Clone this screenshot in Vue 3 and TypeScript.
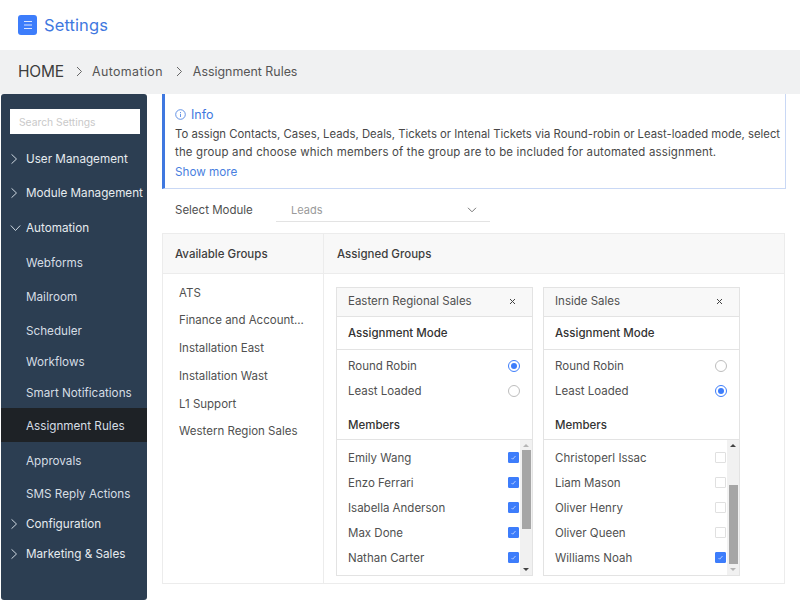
<script setup lang="ts">
interface NavItem { label: string; height: number; icon?: 'right' | 'down'; active?: boolean; nudge?: number }
interface Member { name: string; checked: boolean }
interface GroupCard { title: string; mode: 'round' | 'least'; members: Member[]; thumbOffset: number; topDim: boolean }

const nav: NavItem[] = [
  { label: 'User Management', height: 34, icon: 'right' },
  { label: 'Module Management', height: 34, icon: 'right' },
  { label: 'Automation', height: 36, icon: 'down' },
  { label: 'Webforms', height: 34 },
  { label: 'Mailroom', height: 34 },
  { label: 'Scheduler', height: 34 },
  { label: 'Workflows', height: 28 },
  { label: 'Smart Notifications', height: 32, nudge: 2 },
  { label: 'Assignment Rules', height: 34, active: true, nudge: 2 },
  { label: 'Approvals', height: 37 },
  { label: 'SMS Reply Actions', height: 30 },
  { label: 'Configuration', height: 30, icon: 'right' },
  { label: 'Marketing & Sales', height: 30, icon: 'right' },
]

const groups: string[] = [
  'ATS',
  'Finance and Account...',
  'Installation East',
  'Installation Wast',
  'L1 Support',
  'Western Region Sales',
]

const cards: GroupCard[] = [
  {
    title: 'Eastern Regional Sales',
    mode: 'round',
    thumbOffset: 10,
    topDim: true,
    members: [
      { name: 'Emily Wang', checked: true },
      { name: 'Enzo Ferrari', checked: true },
      { name: 'Isabella Anderson', checked: true },
      { name: 'Max Done', checked: true },
      { name: 'Nathan Carter', checked: true },
    ],
  },
  {
    title: 'Inside Sales',
    mode: 'least',
    thumbOffset: 45,
    topDim: false,
    members: [
      { name: 'Christoperl Issac', checked: false },
      { name: 'Liam Mason', checked: false },
      { name: 'Oliver Henry', checked: false },
      { name: 'Oliver Queen', checked: false },
      { name: 'Williams Noah', checked: true },
    ],
  },
]
</script>

<template>
  <div class="page">
    <header class="top">
      <span class="logo">
        <svg width="10" height="10" viewBox="0 0 10 10" fill="none" stroke="#dbe6ff" stroke-width="1">
          <path d="M1 1.5h8M1 5h8M1 8.5h8" />
        </svg>
      </span>
      <span class="title">Settings</span>
    </header>

    <nav class="crumbs">
      <span class="home">HOME</span>
      <svg class="crumb-sep" width="7" height="11" viewBox="0 0 7 11" fill="none" stroke="#666" stroke-width="1">
        <path d="M1 1l4.5 4.5L1 10" />
      </svg>
      <span class="crumb crumb-wide">Automation</span>
      <svg class="crumb-sep second" width="7" height="11" viewBox="0 0 7 11" fill="none" stroke="#666" stroke-width="1">
        <path d="M1 1l4.5 4.5L1 10" />
      </svg>
      <span class="crumb">Assignment Rules</span>
    </nav>

    <div class="body">
      <aside class="side">
        <div class="search">Search Settings</div>
        <ul class="nav">
          <li
            v-for="item in nav"
            :key="item.label"
            class="nav-row"
            :class="{ active: item.active, parent: item.icon }"
            :style="{ height: item.height + 'px', paddingTop: (item.nudge ?? 0) + 'px' }"
          >
            <svg v-if="item.icon === 'right'" class="nav-ico" width="8" height="11" viewBox="0 0 8 11" fill="none" stroke="#cfd8e0" stroke-width="1">
              <path d="M1.5 .8l5 4.7-5 4.7" />
            </svg>
            <svg v-if="item.icon === 'down'" class="nav-ico" width="11" height="8" viewBox="0 0 11 8" fill="none" stroke="#cfd8e0" stroke-width="1">
              <path d="M.8 1.5l4.7 5 4.7-5" />
            </svg>
            <span class="nav-label">{{ item.label }}</span>
          </li>
        </ul>
      </aside>

      <main class="main">
        <section class="info">
          <div class="info-head">
            <svg width="11" height="11" viewBox="0 0 11 11" fill="none" stroke="#3f78e0" stroke-width=".8">
              <circle cx="5.5" cy="5.5" r="4.8" />
              <path d="M5.5 4.8v3.2M5.5 3v1" />
            </svg>
            <span>Info</span>
          </div>
          <p class="info-text"><span class="line-a">To assign Contacts, Cases, Leads, Deals, Tickets or Intenal Tickets via Round-robin or Least-loaded mode, select</span><br /><span class="line-b">the group and choose which members of the group are to be included for automated assignment.</span></p>
          <a class="more">Show more</a>
        </section>

        <div class="module">
          <span class="module-label">Select Module</span>
          <div class="module-select">
            <span>Leads</span>
            <svg width="10" height="6" viewBox="0 0 10 6" fill="none" stroke="#777" stroke-width="1">
              <path d="M1 .8l4 4 4-4" />
            </svg>
          </div>
        </div>

        <section class="table">
          <div class="col-left">
            <div class="th">Available Groups</div>
            <ul class="groups">
              <li v-for="g in groups" :key="g" class="group">{{ g }}</li>
            </ul>
          </div>
          <div class="col-right">
            <div class="th th-right">Assigned Groups</div>
            <div class="cards">
              <article v-for="card in cards" :key="card.title" class="card">
                <div class="card-head">
                  <span>{{ card.title }}</span>
                  <svg width="7" height="7" viewBox="0 0 7 7" fill="none" stroke="#444" stroke-width="1">
                    <path d="M1 1l5 5M6 1L1 6" />
                  </svg>
                </div>
                <div class="card-h mode-h">Assignment Mode</div>
                <div class="modes">
                  <div class="mode">
                    <span>Round Robin</span>
                    <span class="radio" :class="{ on: card.mode === 'round' }"></span>
                  </div>
                  <div class="mode">
                    <span>Least Loaded</span>
                    <span class="radio" :class="{ on: card.mode === 'least' }"></span>
                  </div>
                </div>
                <div class="card-h members-h">Members</div>
                <div class="members">
                  <ul class="member-list">
                    <li v-for="m in card.members" :key="m.name" class="member">
                      <span>{{ m.name }}</span>
                      <span class="check" :class="{ on: m.checked }">
                        <svg v-if="m.checked" width="7" height="7" viewBox="0 0 7 7" fill="none" stroke="#cfe0ff" stroke-width=".8">
                          <path d="M1.5 4l1.2 1.2L5.5 2" />
                        </svg>
                      </span>
                    </li>
                  </ul>
                  <div class="scroll">
                    <span class="arrow up" :class="{ dim: card.topDim }"></span>
                    <span class="thumb" :style="{ marginTop: card.thumbOffset + 'px' }"></span>
                    <span class="arrow down" :class="{ dim: !card.topDim }"></span>
                  </div>
                </div>
              </article>
            </div>
          </div>
        </section>
      </main>
    </div>
  </div>
</template>

<style>
html, body { margin: 0; background: #fff; }
</style>

<style scoped>
* { box-sizing: border-box; }
ul { list-style: none; margin: 0; padding: 0; }
p { margin: 0; }
.page {
  width: 800px;
  height: 600px;
  overflow: hidden;
  display: flex;
  flex-direction: column;
  font-family: Inter, "Open Sans", sans-serif;
  font-size: 11.5px;
  color: #505050;
  background: #fff;
}
.top {
  height: 50px;
  flex: none;
  display: flex;
  align-items: center;
  padding-left: 18px;
  gap: 7px;
}
.logo {
  width: 19px;
  height: 20px;
  margin-top: -1px;
  border-radius: 3px;
  background: #3d7dfb;
  display: flex;
  align-items: center;
  justify-content: center;
}
.title { font-size: 16.5px; color: #3f78e0; letter-spacing: .1px; }
.crumbs {
  height: 44px;
  flex: none;
  background: #f0f1f2;
  display: flex;
  align-items: center;
  padding: 0 0 2px 18px;
  color: #555;
}
.home { font-size: 15.5px; color: #3d3d3d; width: 58px; letter-spacing: -.2px; }
.crumb { font-size: 12.4px; }
.crumb-wide { letter-spacing: .4px; }
.crumb-sep { margin: 0 9px 0 0; }
.crumb-sep.second { margin: 0 10px 0 13px; }
.body { flex: 1; display: flex; min-height: 0; }
.side {
  width: 146px;
  margin-left: 1px;
  flex: none;
  background: #2c3e52;
  border-radius: 3px;
  padding-top: 15px;
}
.search {
  width: 130px;
  height: 25px;
  margin-left: 9px;
  background: #fff;
  color: #c9c9c9;
  font-size: 10.3px;
  line-height: 26px;
  padding-left: 9px;
}
.nav { margin-top: 8px; }
.nav-row {
  position: relative;
  display: flex;
  align-items: center;
  padding-left: 25px;
  color: #d5dde4;
  font-size: 11.7px;
  white-space: nowrap;
}
.nav-row.parent { color: #e6ebef; }
.nav-row.active { background: #1e2226; }
.nav-ico { position: absolute; left: 9px; top: 50%; transform: translateY(-50%); }
.main { flex: 1; min-width: 0; padding-left: 15px; }
.info {
  width: 624px;
  height: 95px;
  border: 1px solid #c9d8f5;
  border-top: none;
  border-left: 3px solid #3f78e0;
  padding: 13px 0 0 10px;
  color: #484848;
}
.info-head {
  display: flex;
  align-items: center;
  gap: 5px;
  color: #3f78e0;
  font-size: 12.5px;
  height: 14px;
}
.info-text { margin-top: 4px; line-height: 18px; white-space: nowrap; }
.line-a { font-size: 11.32px; }
.line-b { font-size: 11.45px; letter-spacing: .17px; }
.more { display: block; margin-top: 3px; color: #4a7fe0; font-size: 11.7px; line-height: 16px; }
.module {
  height: 44px;
  display: flex;
  align-items: center;
  padding: 0 0 2px 13px;
}
.module-label { width: 101px; }
.module-select {
  width: 214px;
  height: 24px;
  border-bottom: 1px solid #e3e3e3;
  display: flex;
  align-items: center;
  justify-content: space-between;
  padding: 0 13px 0 15px;
  color: #9a9a9a;
  font-size: 11px;
}
.table {
  width: 623px;
  height: 351px;
  border: 1px solid #ececec;
  display: flex;
}
.col-left { width: 161px; flex: none; border-right: 1px solid #ececec; }
.col-right { flex: 1; min-width: 0; }
.th {
  height: 40px;
  background: #f8f8f8;
  border-bottom: 1px solid #ececec;
  display: flex;
  align-items: center;
  padding-left: 12px;
  font-weight: 500;
  color: #3e3e3e;
}
.th-right { padding-left: 13px; }
.groups { padding: 5.5px 0 0 16px; }
.group {
  height: 27.8px;
  line-height: 27.8px;
  white-space: nowrap;
}
.cards { display: flex; gap: 10px; padding: 13px 0 0 12px; }
.card {
  width: 197px;
  height: 289px;
  border: 1px solid #e3e3e3;
  display: flex;
  flex-direction: column;
}
.card-head {
  height: 29px;
  flex: none;
  background: #f8f8f8;
  border-bottom: 1px solid #e3e3e3;
  display: flex;
  align-items: center;
  justify-content: space-between;
  padding: 0 16px 2px 11px;
}
.card-h { font-weight: 500; color: #333; padding-left: 11px; flex: none; }
.mode-h {
  height: 33px;
  line-height: 32px;
  border-bottom: 1px solid #e3e3e3;
}
.modes { padding: 3px 12px 0 11px; flex: none; }
.mode {
  height: 25.5px;
  display: flex;
  align-items: center;
  justify-content: space-between;
}
.radio {
  width: 12px;
  height: 12px;
  border-radius: 50%;
  border: 1px solid #bdbdbd;
  display: flex;
  align-items: center;
  justify-content: center;
  background: #fff;
}
.radio.on { border-color: #3d7dfb; }
.radio.on::after {
  content: "";
  width: 6px;
  height: 6px;
  border-radius: 50%;
  background: #3d7dfb;
}
.members-h {
  height: 30px;
  line-height: 30px;
  margin-top: 6px;
  border-bottom: 1px solid #e3e3e3;
}
.members { flex: 1; display: flex; min-height: 0; }
.member-list { flex: 1; min-width: 0; padding: 5px 1px 0 11px; }
.member {
  height: 25px;
  display: flex;
  align-items: center;
  justify-content: space-between;
}
.check {
  width: 11px;
  height: 11px;
  border: 1px solid #e0e0e0;
  border-radius: 1px;
  display: flex;
  align-items: center;
  justify-content: center;
  background: #fff;
}
.check.on { background: #3d7dfb; border-color: #3d7dfb; }
.scroll {
  width: 12px;
  flex: none;
  background: #f1f1f1;
  position: relative;
  padding: 0 1px 0 2px;
}
.thumb { display: block; height: 79px; background: #a6a6a6; }
.arrow {
  position: absolute;
  left: 3px;
  width: 0;
  height: 0;
  border-left: 3px solid transparent;
  border-right: 3px solid transparent;
}
.arrow.up { top: 4px; border-bottom: 3px solid #444; }
.arrow.down { bottom: 4px; border-top: 3px solid #444; }
.arrow.up.dim { border-bottom-color: #b5b5b5; }
.arrow.down.dim { border-top-color: #b5b5b5; }
</style>
